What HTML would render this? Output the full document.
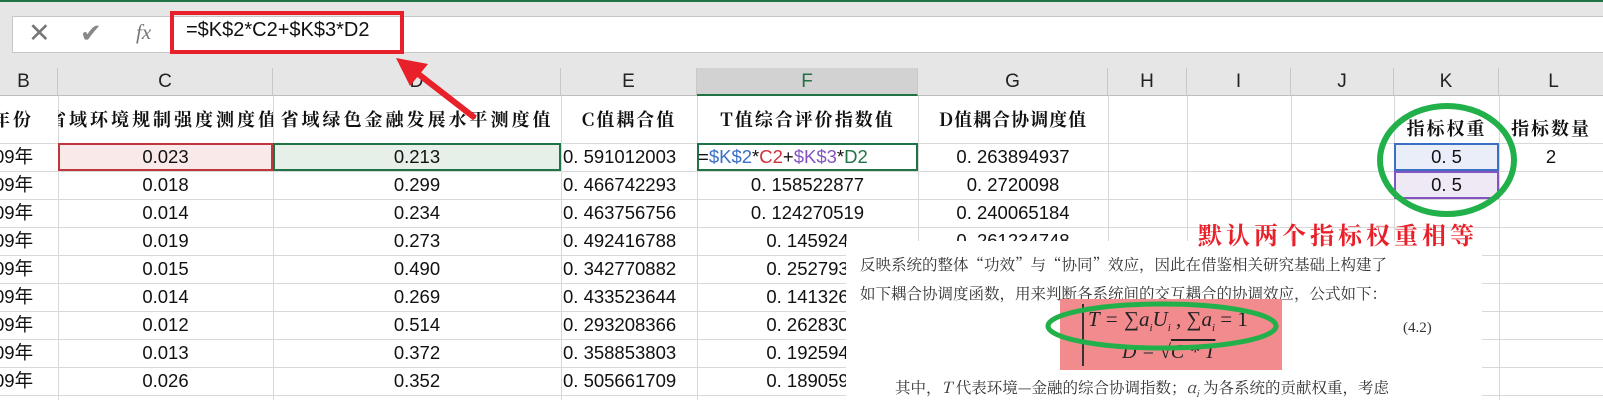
<!DOCTYPE html>
<html><head><meta charset="utf-8"><style>
*{margin:0;padding:0;box-sizing:border-box}
body{width:1603px;height:400px;overflow:hidden;background:#fff;position:relative;font-family:"Liberation Sans","Noto Sans CJK SC",sans-serif;color:#111}
.a{position:absolute}
.hd{position:absolute;top:68px;height:28px;background:#e6e6e6;border-right:1px solid #c8c8c8;border-bottom:1px solid #bdbdbd;text-align:center;font-size:19px;line-height:28px;color:#222}
.vl{position:absolute;top:96px;height:304px;width:1px;background:#d8d8d8}
.hl{position:absolute;left:0;width:1603px;height:1px;background:#d8d8d8}
.t{position:absolute;top:96px;height:47px;line-height:47px;text-align:center;font-family:"Noto Serif CJK SC",serif;font-size:18px;font-weight:bold;letter-spacing:3px;white-space:nowrap;overflow:hidden}
.c{position:absolute;height:28px;line-height:28px;text-align:center;font-size:18.5px;white-space:nowrap;overflow:hidden}
</style></head><body>
<div class="a" style="left:0;top:0;width:1603px;height:68px;background:#e6e6e6"></div>
<div class="a" style="left:0;top:0;width:1603px;height:2px;background:#217346"></div>
<div class="a" style="left:12px;top:16px;width:1600px;height:37px;background:#fff;border:1px solid #c6c6c6"></div>
<div class="a" style="left:28px;top:18px;font-size:27px;color:#777;font-weight:300">✕</div>
<div class="a" style="left:80px;top:18px;font-size:26px;color:#888">✔</div>
<div class="a" style="left:136px;top:20px;font-size:21px;color:#777;font-family:'Liberation Serif',serif;font-style:italic">fx</div>
<div class="a" style="left:170px;top:11px;width:234px;height:43px;border:4px solid #e8202a"></div>
<div class="a" style="left:186px;top:19px;font-size:20px">=$K$2*C2+$K$3*D2</div>

<div class="hd" style="left:-10px;width:68px">B</div>
<div class="hd" style="left:58px;width:215px">C</div>
<div class="hd" style="left:273px;width:288px">D</div>
<div class="hd" style="left:561px;width:136px">E</div>
<div class="hd" style="left:697px;width:221px;background:#d2d2d2;border-bottom:2px solid #217346;color:#217346">F</div>
<div class="hd" style="left:918px;width:190px">G</div>
<div class="hd" style="left:1108px;width:79px">H</div>
<div class="hd" style="left:1187px;width:104px">I</div>
<div class="hd" style="left:1291px;width:103px">J</div>
<div class="hd" style="left:1394px;width:105px">K</div>
<div class="hd" style="left:1499px;width:110px">L</div>

<div class="vl" style="left:58px"></div><div class="vl" style="left:273px"></div><div class="vl" style="left:561px"></div><div class="vl" style="left:697px"></div><div class="vl" style="left:918px"></div><div class="vl" style="left:1108px"></div><div class="vl" style="left:1187px"></div><div class="vl" style="left:1291px"></div><div class="vl" style="left:1394px"></div><div class="vl" style="left:1499px"></div>
<div class="hl" style="top:143px"></div><div class="hl" style="top:171px"></div><div class="hl" style="top:199px"></div><div class="hl" style="top:227px"></div><div class="hl" style="top:255px"></div><div class="hl" style="top:283px"></div><div class="hl" style="top:311px"></div><div class="hl" style="top:339px"></div><div class="hl" style="top:367px"></div><div class="hl" style="top:395px"></div>

<div class="t" style="left:-8px;width:66px;text-align:left">年份</div>
<div class="t" style="left:58px;width:215px;text-align:left;text-indent:-10px">省域环境规制强度测度值</div>
<div class="t" style="left:273px;width:288px">省域绿色金融发展水平测度值</div>
<div class="t" style="left:561px;width:136px;letter-spacing:2px">C值耦合值</div>
<div class="t" style="left:697px;width:221px;letter-spacing:2px">T值综合评价指数值</div>
<div class="t" style="left:918px;width:190px;letter-spacing:1px">D值耦合协调度值</div>
<div class="t" style="left:1394px;width:105px;top:105px;letter-spacing:2px">指标权重</div>
<div class="t" style="left:1499px;width:104px;top:105px;letter-spacing:2px">指标数量</div>

<div class="a" style="left:58px;top:143px;width:215px;height:28px;background:#f9e9e9;border:2px solid #c0353e"></div>
<div class="a" style="left:273px;top:143px;width:288px;height:28px;background:#e6f0e8;border:2px solid #217346"></div>
<div class="a" style="left:697px;top:143px;width:221px;height:28px;border:2px solid #217346"></div>
<div class="a" style="left:1394px;top:143px;width:105px;height:28px;background:#e9eef8;border:2px solid #3a6fc4"></div>
<div class="a" style="left:1394px;top:171px;width:105px;height:28px;background:#efe9f6;border:2px solid #8455c0"></div>

<div class="c" style="left:0;top:143px;width:58px;text-align:left;text-indent:-6px">09年</div>
<div class="c" style="left:0;top:171px;width:58px;text-align:left;text-indent:-6px">09年</div>
<div class="c" style="left:0;top:199px;width:58px;text-align:left;text-indent:-6px">09年</div>
<div class="c" style="left:0;top:227px;width:58px;text-align:left;text-indent:-6px">09年</div>
<div class="c" style="left:0;top:255px;width:58px;text-align:left;text-indent:-6px">09年</div>
<div class="c" style="left:0;top:283px;width:58px;text-align:left;text-indent:-6px">09年</div>
<div class="c" style="left:0;top:311px;width:58px;text-align:left;text-indent:-6px">09年</div>
<div class="c" style="left:0;top:339px;width:58px;text-align:left;text-indent:-6px">09年</div>
<div class="c" style="left:0;top:367px;width:58px;text-align:left;text-indent:-6px">09年</div>

<div class="c" style="left:58px;top:143px;width:215px">0.023</div>
<div class="c" style="left:58px;top:171px;width:215px">0.018</div>
<div class="c" style="left:58px;top:199px;width:215px">0.014</div>
<div class="c" style="left:58px;top:227px;width:215px">0.019</div>
<div class="c" style="left:58px;top:255px;width:215px">0.015</div>
<div class="c" style="left:58px;top:283px;width:215px">0.014</div>
<div class="c" style="left:58px;top:311px;width:215px">0.012</div>
<div class="c" style="left:58px;top:339px;width:215px">0.013</div>
<div class="c" style="left:58px;top:367px;width:215px">0.026</div>

<div class="c" style="left:273px;top:143px;width:288px">0.213</div>
<div class="c" style="left:273px;top:171px;width:288px">0.299</div>
<div class="c" style="left:273px;top:199px;width:288px">0.234</div>
<div class="c" style="left:273px;top:227px;width:288px">0.273</div>
<div class="c" style="left:273px;top:255px;width:288px">0.490</div>
<div class="c" style="left:273px;top:283px;width:288px">0.269</div>
<div class="c" style="left:273px;top:311px;width:288px">0.514</div>
<div class="c" style="left:273px;top:339px;width:288px">0.372</div>
<div class="c" style="left:273px;top:367px;width:288px">0.352</div>

<div class="c" style="left:563px;top:143px;width:136px;text-align:left">0. 591012003</div>
<div class="c" style="left:563px;top:171px;width:136px;text-align:left">0. 466742293</div>
<div class="c" style="left:563px;top:199px;width:136px;text-align:left">0. 463756756</div>
<div class="c" style="left:563px;top:227px;width:136px;text-align:left">0. 492416788</div>
<div class="c" style="left:563px;top:255px;width:136px;text-align:left">0. 342770882</div>
<div class="c" style="left:563px;top:283px;width:136px;text-align:left">0. 433523644</div>
<div class="c" style="left:563px;top:311px;width:136px;text-align:left">0. 293208366</div>
<div class="c" style="left:563px;top:339px;width:136px;text-align:left">0. 358853803</div>
<div class="c" style="left:563px;top:367px;width:136px;text-align:left">0. 505661709</div>

<div class="c" style="left:698px;top:143px;width:221px;text-align:left">=<span style="color:#3a6fc4">$K$2</span>*<span style="color:#d0303a">C2</span>+<span style="color:#8455c0">$K$3</span>*<span style="color:#217346">D2</span></div>
<div class="c" style="left:697px;top:171px;width:221px">0. 158522877</div>
<div class="c" style="left:697px;top:199px;width:221px">0. 124270519</div>
<div class="c" style="left:697px;top:227px;width:221px">0. 145924</div>
<div class="c" style="left:697px;top:255px;width:221px">0. 252793</div>
<div class="c" style="left:697px;top:283px;width:221px">0. 141326</div>
<div class="c" style="left:697px;top:311px;width:221px">0. 262830</div>
<div class="c" style="left:697px;top:339px;width:221px">0. 192594</div>
<div class="c" style="left:697px;top:367px;width:221px">0. 189059</div>

<div class="c" style="left:918px;top:143px;width:190px">0. 263894937</div>
<div class="c" style="left:918px;top:171px;width:190px">0. 2720098</div>
<div class="c" style="left:918px;top:199px;width:190px">0. 240065184</div>
<div class="c" style="left:918px;top:227px;width:190px">0. 261234748</div>

<div class="c" style="left:1394px;top:143px;width:105px">0. 5</div>
<div class="c" style="left:1394px;top:171px;width:105px">0. 5</div>
<div class="c" style="left:1499px;top:143px;width:104px">2</div>

<svg class="a" style="left:1375px;top:100px" width="150" height="124"><ellipse cx="72" cy="60" rx="67" ry="54" fill="none" stroke="#22b04a" stroke-width="6"/></svg>

<div class="a" style="left:846px;top:241px;width:636px;height:159px;background:#fff"></div>
<div class="a" style="left:1198px;top:216px;font-size:24px;color:#e8202a;font-family:'Noto Serif CJK SC',serif;font-weight:bold;letter-spacing:4px;white-space:nowrap">默认两个指标权重相等</div>
<div class="a" style="left:860px;top:253px;font-size:15.5px;color:#333;font-family:'Noto Serif CJK SC',serif;white-space:nowrap">反映系统的整体“功效”与“协同”效应，因此在借鉴相关研究基础上构建了</div>
<div class="a" style="left:860px;top:282px;font-size:15.5px;color:#333;font-family:'Noto Serif CJK SC',serif;white-space:nowrap">如下耦合协调度函数，用来判断各系统间的交互耦合的协调效应，公式如下：</div>
<div class="a" style="left:1060px;top:299px;width:222px;height:71px;background:#f28b8e"></div>
<div class="a" style="left:1082px;top:304px;width:2px;height:62px;background:#333"></div>
<div class="a" style="left:1088px;top:307px;font-size:21px;font-family:'Liberation Serif',serif;font-style:italic;color:#222;white-space:nowrap">T = ∑a<sub style="font-size:11px">i</sub>U<sub style="font-size:11px">i</sub> , ∑a<sub style="font-size:11px">i</sub> <span style="font-style:normal">= 1</span></div>
<div class="a" style="left:1122px;top:341px;font-size:20px;font-family:'Liberation Serif',serif;font-style:italic;color:#222;white-space:nowrap">D = √<span style="text-decoration:overline">C * T</span></div>
<svg class="a" style="left:1044px;top:300px" width="236" height="52"><ellipse cx="118" cy="26" rx="114" ry="22" fill="none" stroke="#22b04a" stroke-width="5"/></svg>
<div class="a" style="left:1403px;top:320px;font-size:15px;color:#333;font-family:'Liberation Serif',serif">(4.2)</div>
<div class="a" style="left:895px;top:376px;font-size:15.5px;color:#333;font-family:'Noto Serif CJK SC',serif;white-space:nowrap">其中，<i>T</i> 代表环境—金融的综合协调指数；<i>α<sub style="font-size:9px">i</sub></i> 为各系统的贡献权重，考虑</div>

<svg class="a" style="left:380px;top:50px" width="110" height="80"><line x1="95" y1="68" x2="28" y2="16" stroke="#e8202a" stroke-width="6"/><polygon points="16,8 48,14 30,36" fill="#e8202a"/></svg>
</body></html>
